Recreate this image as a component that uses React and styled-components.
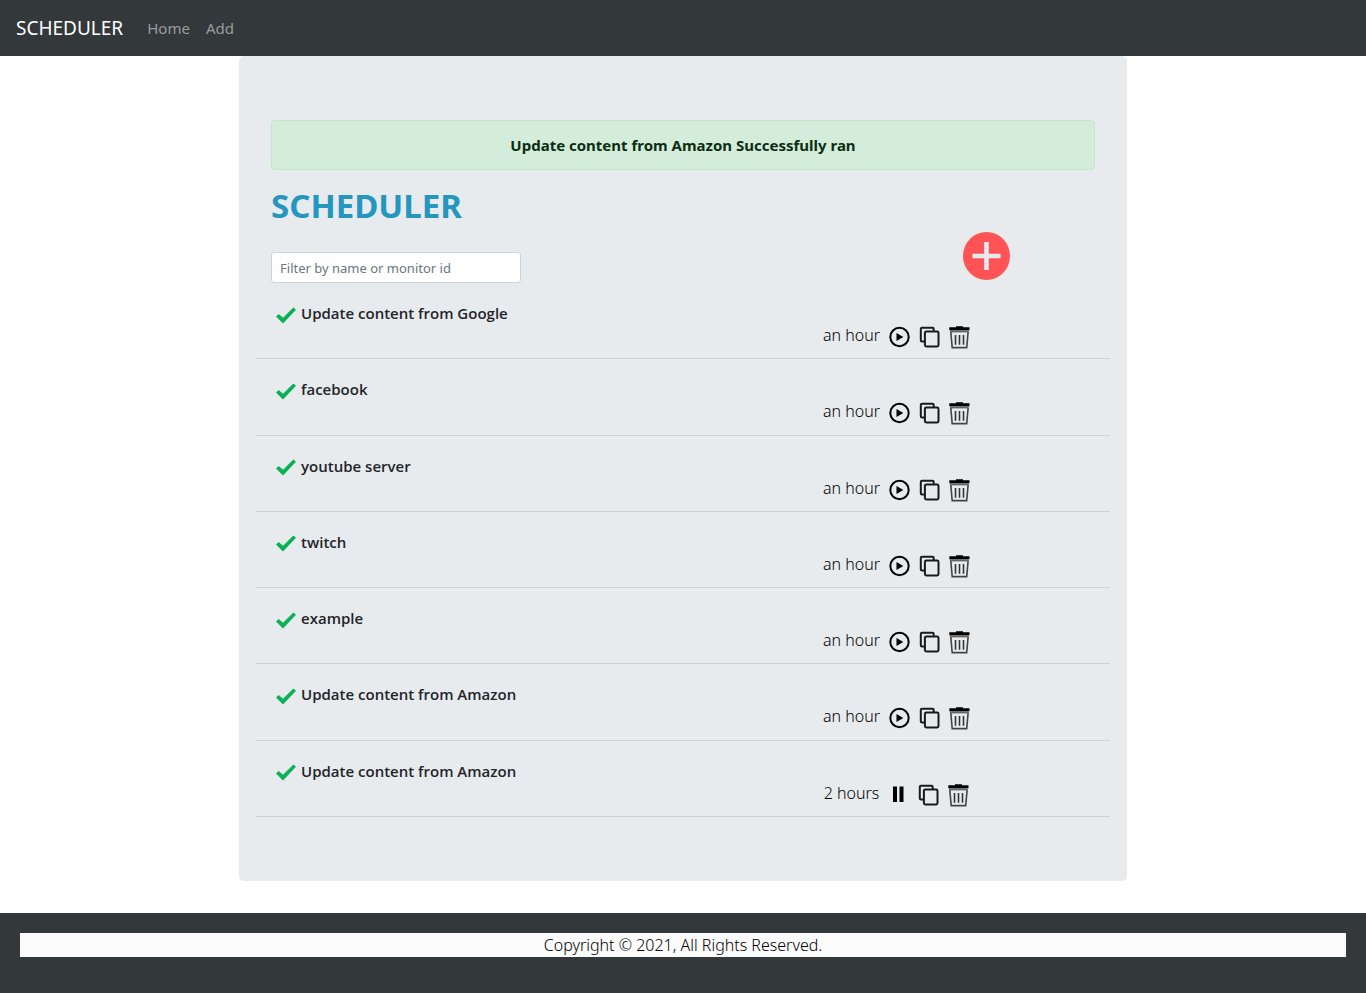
import React from "react";
import styled, { createGlobalStyle } from "styled-components";

const GlobalStyle = createGlobalStyle`
  *, *::before, *::after { box-sizing: border-box; }
  body {
    margin: 0;
    background: #fff;
    color: #212529;
    font-family: "Noto Sans", "Open Sans", sans-serif;
    font-size: 15px;
    line-height: 24px;
  }
`;

const Navbar = styled.nav`
  display: flex;
  align-items: center;
  min-height: 56px;
  padding: 0 16px;
  background: #33383b;
`;

const Brand = styled.a`
  margin-right: 16px;
  color: #fff;
  font-size: 19px;
  text-decoration: none;
`;

const NavLink = styled.a`
  padding: 0 8px;
  color: #999c9d;
  font-size: 15px;
  text-decoration: none;
`;

const Panel = styled.main`
  width: 65%;
  margin: 0 auto 32px;
  padding: 64px 32px;
  border-radius: 5px;
  background: #e8ebee;
`;

const Alert = styled.div`
  padding: 12px 20px;
  border: 1px solid #c3e6cb;
  border-radius: 4px;
  background: #d4ecda;
  color: #0b2e13;
  font-weight: 700;
  text-align: center;
`;

const Title = styled.h1`
  margin: 16px 0 6px;
  color: #2596be;
  font-size: 33px;
  font-weight: 700;
  line-height: 40px;
`;

const Toolbar = styled.div`
  display: flex;
  align-items: flex-end;
  justify-content: space-between;
  padding-right: 85px;
`;

const FilterInput = styled.input`
  width: 250px;
  height: 31px;
  padding: 4px 8px;
  border: 1px solid #ced4da;
  border-radius: 3px;
  background: #fff;
  color: #495057;
  font-family: inherit;
  font-size: 13px;

  &::placeholder { color: #6c757d; opacity: 1; }
`;

const IconButton = styled.button`
  display: block;
  padding: 0;
  border: 0;
  background: none;
  color: #000;
  cursor: pointer;

  svg { display: block; }
`;

const AddButton = styled(IconButton)`
  margin-bottom: 3px;
`;

const JobList = styled.ul`
  display: grid;
  grid-auto-rows: 1fr;
  min-height: 534px;
  margin: 0 -15px;
  padding: 0;
  list-style: none;
`;

const JobRow = styled.li`
  padding-top: 19px;
  border-bottom: 1px solid #cfd2d4;
`;

const JobName = styled.div`
  display: flex;
  align-items: center;
  gap: 5px;
  padding-left: 20px;
  font-family: "Open Sans", "Noto Sans", sans-serif;
  font-weight: 600;
  line-height: 22px;

  svg { margin-top: 4px; }
`;

const JobActions = styled.div`
  display: flex;
  align-items: flex-start;
  justify-content: center;
  gap: 9px;
  width: 50%;
  margin-left: auto;
  line-height: 22px;

  button { margin-top: 2px; }
`;

const Interval = styled.span`
  color: #000;
  font-size: 16px;
  font-weight: 300;
`;

const Footer = styled.footer`
  min-height: 80px;
  padding: 20px;
  background: #33383b;
`;

const Copyright = styled.p`
  margin: 0;
  background: #fbfbfb;
  color: #000;
  font-size: 16px;
  font-weight: 300;
  text-align: center;
`;

const CheckIcon = () => (
  <svg width="20" height="17" viewBox="0 0 20 17" aria-hidden="true">
    <path d="M0 9.500 L2.700 7 L7 10.800 L17.400 0.500 L20 2.800 L7 16.400 Z" fill="#0bb157" />
  </svg>
);

const AddIcon = () => (
  <svg width="47" height="48" viewBox="0 0 47 48" aria-hidden="true">
    <ellipse cx="23.5" cy="24" rx="23.5" ry="24" fill="#ff5355" />
    <path d="M23.500 10v28M9.500 24h28" stroke="#e8ebee" strokeWidth="4.600" fill="none" />
  </svg>
);

const PlayIcon = () => (
  <svg width="21" height="22" viewBox="0 0 21 22" aria-hidden="true">
    <circle cx="10.5" cy="11" r="9.2" fill="none" stroke="#000" strokeWidth="2" />
    <path d="M7.500 7v8l6.800-4z" fill="#000" />
  </svg>
);

const PauseIcon = () => (
  <svg width="21" height="22" viewBox="0 0 21 22" aria-hidden="true">
    <path d="M5 2.500h4v15.500H5zM11.500 2.500h4v15.500h-4z" fill="#000" />
  </svg>
);

const CopyIcon = () => (
  <svg width="21" height="22" viewBox="0 0 21 22" aria-hidden="true">
    <path
      d="M5.500 15.500H3q-1.200 0-1.200-1.200V3Q1.800 1.800 3 1.800h10.500q1.200 0 1.200 1.200v2"
      fill="none"
      stroke="#1a1a1a"
      strokeWidth="2"
    />
    <rect x="5.900" y="5.500" width="13.600" height="15" rx="1.400" fill="none" stroke="#1a1a1a" strokeWidth="2" />
  </svg>
);

const TrashIcon = () => (
  <svg width="21" height="23" viewBox="0 0 21 23" aria-hidden="true">
    <path d="M0.300 1.300H7V0.300h7v1h6.500v3H0.300z" fill="#000" />
    <path d="M1 5.300h18.800" stroke="#666" strokeWidth="2.200" />
    <path d="M1.800 6l1.400 15.600h14.500L19.100 6" fill="none" stroke="#444" strokeWidth="1.600" />
    <path d="M6.500 9v9.800M10.500 9v9.800M14.500 9v9.800" fill="none" stroke="#333" strokeWidth="1.600" />
  </svg>
);

const jobs = [
  { name: "Update content from Google", interval: "an hour" },
  { name: "facebook", interval: "an hour" },
  { name: "youtube server", interval: "an hour" },
  { name: "twitch", interval: "an hour" },
  { name: "example", interval: "an hour" },
  { name: "Update content from Amazon", interval: "an hour" },
  { name: "Update content from Amazon", interval: "2 hours", running: true },
];

export default function App() {
  return (
    <>
      <GlobalStyle />
      <Navbar>
        <Brand href="#">SCHEDULER</Brand>
        <NavLink href="#home">Home</NavLink>
        <NavLink href="#add">Add</NavLink>
      </Navbar>
      <Panel>
        <Alert role="alert">Update content from Amazon Successfully ran</Alert>
        <Title>SCHEDULER</Title>
        <Toolbar>
          <FilterInput
            type="text"
            aria-label="Filter by name or monitor id"
            placeholder="Filter by name or monitor id"
          />
          <AddButton type="button" aria-label="Add"><AddIcon /></AddButton>
        </Toolbar>
        <JobList>
          {jobs.map((job, index) => (
            <JobRow key={index}>
              <JobName><CheckIcon />{job.name}</JobName>
              <JobActions>
                <Interval>{job.interval}</Interval>
                <IconButton type="button" aria-label={job.running ? "Pause" : "Run"}>
                  {job.running ? <PauseIcon /> : <PlayIcon />}
                </IconButton>
                <IconButton type="button" aria-label="Copy"><CopyIcon /></IconButton>
                <IconButton type="button" aria-label="Delete"><TrashIcon /></IconButton>
              </JobActions>
            </JobRow>
          ))}
        </JobList>
      </Panel>
      <Footer>
        <Copyright>Copyright © 2021, All Rights Reserved.</Copyright>
      </Footer>
    </>
  );
}
